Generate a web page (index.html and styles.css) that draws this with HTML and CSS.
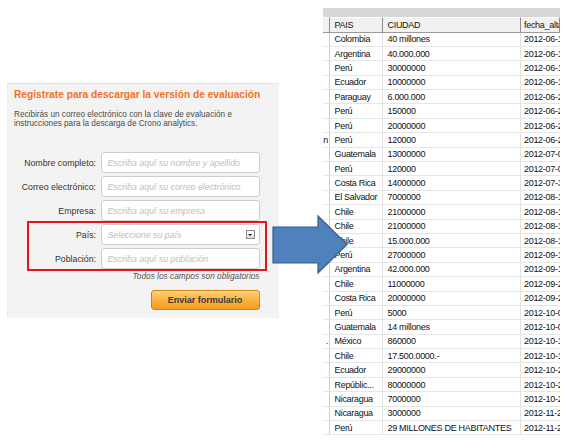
FILE: index.html
```html
<!DOCTYPE html>
<html lang="es">
<head>
<meta charset="utf-8">
<title>Registro</title>
<link rel="stylesheet" href="styles.css">
</head>
<body>
<div class="page">
  <section class="left">
    <div class="panel">
      <h1 class="title">Registrate para descargar la versión de evaluación</h1>
      <p class="desc">Recibirás un correo electrónico con la clave de evaluación e<br>instrucciones para la descarga de Crono analytics.</p>
      <div class="fields">
        <div class="row"><span class="label">Nombre completo:</span><div class="input">Escriba aquí su nombre y apellido</div></div>
        <div class="row"><span class="label">Correo electrónico:</span><div class="input">Escriba aquí su correo electrónico</div></div>
        <div class="row"><span class="label">Empresa:</span><div class="input">Escriba aquí su empresa</div></div>
        <div class="row"><span class="label">País:</span><div class="input select">Seleccione su país<span class="drop"></span></div></div>
        <div class="row"><span class="label">Población:</span><div class="input">Escriba aquí su población</div></div>
        <div class="note">Todos los campos son obligatorios</div>
        <div class="actions"><button class="btn" type="button">Enviar formulario</button></div>
      </div>
    </div>
    <div class="highlight"></div>
  </section>

  <section class="grid">
    <div class="topbar"></div>
    <div class="tr head"><div class="c c0"></div><div class="c c1">PAIS</div><div class="c c2">CIUDAD</div><div class="c c3">fecha_alta</div></div>
    <div class="tr"><div class="c c0"></div><div class="c c1">Colombia</div><div class="c c2">40 millones</div><div class="c c3">2012-06-11</div></div>
    <div class="tr"><div class="c c0"></div><div class="c c1">Argentina</div><div class="c c2">40.000.000</div><div class="c c3">2012-06-12</div></div>
    <div class="tr"><div class="c c0"></div><div class="c c1">Perú</div><div class="c c2">30000000</div><div class="c c3">2012-06-13</div></div>
    <div class="tr"><div class="c c0"></div><div class="c c1">Ecuador</div><div class="c c2">10000000</div><div class="c c3">2012-06-14</div></div>
    <div class="tr"><div class="c c0"></div><div class="c c1">Paraguay</div><div class="c c2">6.000.000</div><div class="c c3">2012-06-21</div></div>
    <div class="tr"><div class="c c0"></div><div class="c c1">Perú</div><div class="c c2">150000</div><div class="c c3">2012-06-22</div></div>
    <div class="tr"><div class="c c0"></div><div class="c c1">Perú</div><div class="c c2">20000000</div><div class="c c3">2012-06-25</div></div>
    <div class="tr"><div class="c c0">n</div><div class="c c1">Perú</div><div class="c c2">120000</div><div class="c c3">2012-06-28</div></div>
    <div class="tr"><div class="c c0"></div><div class="c c1">Guatemala</div><div class="c c2">13000000</div><div class="c c3">2012-07-02</div></div>
    <div class="tr"><div class="c c0"></div><div class="c c1">Perú</div><div class="c c2">120000</div><div class="c c3">2012-07-05</div></div>
    <div class="tr"><div class="c c0"></div><div class="c c1">Costa Rica</div><div class="c c2">14000000</div><div class="c c3">2012-07-30</div></div>
    <div class="tr"><div class="c c0"></div><div class="c c1">El Salvador</div><div class="c c2">7000000</div><div class="c c3">2012-08-10</div></div>
    <div class="tr"><div class="c c0"></div><div class="c c1">Chile</div><div class="c c2">21000000</div><div class="c c3">2012-08-13</div></div>
    <div class="tr"><div class="c c0"></div><div class="c c1">Chile</div><div class="c c2">21000000</div><div class="c c3">2012-08-14</div></div>
    <div class="tr"><div class="c c0"></div><div class="c c1">Chile</div><div class="c c2">15.000.000</div><div class="c c3">2012-08-17</div></div>
    <div class="tr"><div class="c c0"></div><div class="c c1">Perú</div><div class="c c2">27000000</div><div class="c c3">2012-09-11</div></div>
    <div class="tr"><div class="c c0"></div><div class="c c1">Argentina</div><div class="c c2">42.000.000</div><div class="c c3">2012-09-14</div></div>
    <div class="tr"><div class="c c0"></div><div class="c c1">Chile</div><div class="c c2">11000000</div><div class="c c3">2012-09-24</div></div>
    <div class="tr"><div class="c c0"></div><div class="c c1">Costa Rica</div><div class="c c2">20000000</div><div class="c c3">2012-09-27</div></div>
    <div class="tr"><div class="c c0"></div><div class="c c1">Perú</div><div class="c c2">5000</div><div class="c c3">2012-10-03</div></div>
    <div class="tr"><div class="c c0"></div><div class="c c1">Guatemala</div><div class="c c2">14 millones</div><div class="c c3">2012-10-05</div></div>
    <div class="tr"><div class="c c0">.</div><div class="c c1">México</div><div class="c c2">860000</div><div class="c c3">2012-10-11</div></div>
    <div class="tr"><div class="c c0"></div><div class="c c1">Chile</div><div class="c c2">17.500.0000.-</div><div class="c c3">2012-10-16</div></div>
    <div class="tr"><div class="c c0"></div><div class="c c1">Ecuador</div><div class="c c2">29000000</div><div class="c c3">2012-10-22</div></div>
    <div class="tr"><div class="c c0"></div><div class="c c1">Repúblic...</div><div class="c c2">80000000</div><div class="c c3">2012-10-24</div></div>
    <div class="tr"><div class="c c0"></div><div class="c c1">Nicaragua</div><div class="c c2">7000000</div><div class="c c3">2012-10-29</div></div>
    <div class="tr"><div class="c c0"></div><div class="c c1">Nicaragua</div><div class="c c2">3000000</div><div class="c c3">2012-11-20</div></div>
    <div class="tr"><div class="c c0"></div><div class="c c1">Perú</div><div class="c c2">29 MILLONES DE HABITANTES</div><div class="c c3">2012-11-27</div></div>
  </section>

  <svg class="arrow" width="82" height="66" viewBox="0 0 82 66" aria-hidden="true">
    <polygon points="3,15 48,15 48,4 77,32.5 48,61 48,51 3,51" fill="#4f81bd" stroke="#385d8a" stroke-width="1.2" stroke-linejoin="miter"/>
  </svg>
</div>
</body>
</html>
```

FILE: styles.css
```css
html, body {
  margin: 0;
  padding: 0;
  background: #ffffff;
}

.page {
  position: relative;
  width: 567px;
  height: 448px;
  overflow: hidden;
  display: flex;
  font-family: "Liberation Sans", Arial, sans-serif;
}

.left {
  position: relative;
  width: 323px;
  flex: none;
  box-sizing: border-box;
  padding: 83px 0 0 7px;
}

.panel {
  width: 272px;
  height: 235px;
  box-sizing: border-box;
  background: #f3f3f3;
  border-top: 1px solid #e2e2e2;
  border-left: 1px solid #ececec;
  padding: 5px 0 0 6px;
}

.title {
  margin: 0;
  font-size: 10.2px;
  line-height: 12px;
  font-weight: 700;
  color: #f4711d;
  white-space: nowrap;
}

.desc {
  margin: 8.5px 0 0;
  font-size: 8.2px;
  line-height: 9.5px;
  color: #4a4a4a;
  white-space: nowrap;
}

.fields {
  margin-top: 23.5px;
  width: 245.5px;
  display: flex;
  flex-direction: column;
  gap: 3px;
}

.row {
  display: flex;
  align-items: center;
  gap: 4.5px;
  height: 21px;
}

.label {
  width: 82px;
  flex: none;
  text-align: right;
  font-size: 8.8px;
  color: #333333;
  white-space: nowrap;
}

.input {
  position: relative;
  width: 159px;
  height: 21px;
  flex: none;
  box-sizing: border-box;
  border: 1px solid #cdcdcd;
  border-radius: 3px;
  background: #ffffff;
  padding-left: 6px;
  display: flex;
  align-items: center;
  font-size: 8.8px;
  font-style: italic;
  color: #bdbdbd;
  white-space: nowrap;
}

.drop {
  position: absolute;
  right: 4px;
  top: 5px;
  width: 9px;
  height: 9px;
  box-sizing: border-box;
  border: 1px solid #8c8c8c;
  background: linear-gradient(#ffffff, #dcdcdc);
}

.drop::after {
  content: "";
  position: absolute;
  left: 1.5px;
  top: 2.5px;
  border-left: 2px solid transparent;
  border-right: 2px solid transparent;
  border-top: 2px solid #222222;
}

.note {
  margin-top: -1px;
  text-align: right;
  font-size: 8.3px;
  line-height: 10px;
  font-style: italic;
  color: #555555;
  white-space: nowrap;
}

.actions {
  margin-top: 6px;
  display: flex;
  justify-content: flex-end;
}

.btn {
  width: 109px;
  height: 20px;
  box-sizing: border-box;
  margin: 0;
  padding: 0;
  border: 1px solid #d1870f;
  border-radius: 3px;
  background: linear-gradient(#ffd27a 0%, #fbb545 45%, #f59d1c 100%);
  font-family: "Liberation Sans", Arial, sans-serif;
  font-size: 9px;
  font-weight: 700;
  color: #3a3a3a;
}

.highlight {
  position: absolute;
  left: 27px;
  top: 221px;
  width: 240px;
  height: 50px;
  box-sizing: border-box;
  border: 2px solid #e8141b;
}

/* data grid */
.grid {
  width: 237px;
  flex: none;
  padding-top: 8px;
  display: flex;
  flex-direction: column;
  font-size: 9px;
  letter-spacing: -0.3px;
  color: #111111;
}

.topbar {
  height: 9px;
  background: #d7d7d7;
}

.tr {
  display: grid;
  grid-template-columns: 7px 53px 138px 1fr;
  height: 14.4px;
}

.tr.head {
  height: 15.5px;
  background: #f1f1f1;
}

.c {
  box-sizing: border-box;
  overflow: hidden;
  white-space: nowrap;
  padding-left: 4.5px;
  border-right: 1px solid #e3e3e3;
  border-bottom: 1px solid #e6e6e6;
  display: flex;
  align-items: center;
}

.head .c {
  border-right: 1px solid #8e8e8e;
  border-bottom: 1px solid #9a9a9a;
  border-top: 1px solid #ffffff;
}

.c0 {
  padding-left: 0;
  justify-content: flex-end;
  padding-right: 1px;
  border-right: 1px solid #cfcfcf;
}

.c3 {
  padding-left: 3px;
  border-right: none;
}

.arrow {
  position: absolute;
  left: 270px;
  top: 212px;
}
```
